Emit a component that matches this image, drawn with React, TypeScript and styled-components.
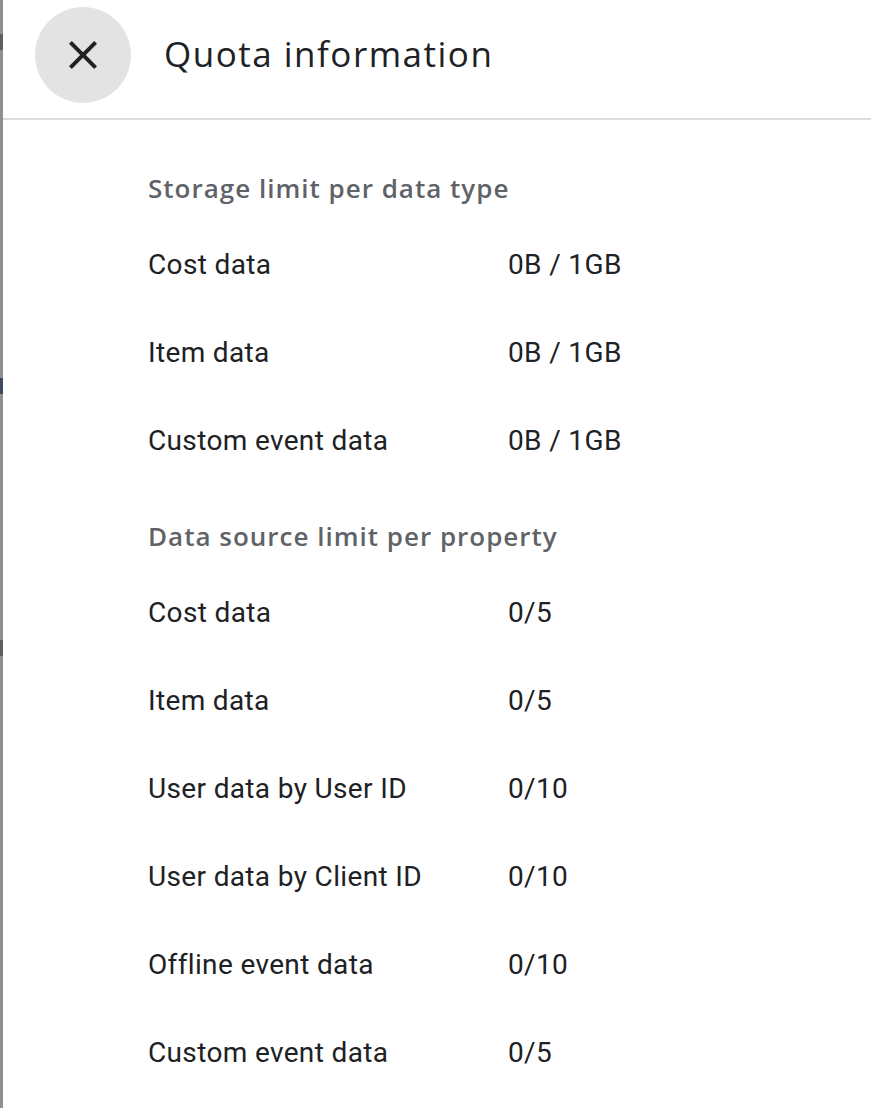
import * as React from 'react';
import styled, { createGlobalStyle } from 'styled-components';

const GlobalStyle = createGlobalStyle`
  html, body {
    margin: 0;
    padding: 0;
    background: #ffffff;
  }
  body {
    font-family: Roboto, "Liberation Sans", Arial, sans-serif;
    -webkit-font-smoothing: antialiased;
  }
`;

const Page = styled.div`
  display: flex;
  width: 871px;
  height: 1108px;
  overflow: hidden;
`;

const Scrim = styled.div`
  width: 3px;
  flex: none;
  background: #8f8f8f;
  display: flex;
  flex-direction: column;
  overflow: hidden;
`;

const ScrimGlyph = styled.span<{ $top: number; $color?: string }>`
  display: block;
  margin-top: ${(p) => p.$top}px;
  height: 16px;
  width: 3px;
  background: ${(p) => p.$color || '#4a4a4a'};
  opacity: 0.7;
`;

const Drawer = styled.div`
  flex: 1;
  display: flex;
  flex-direction: column;
  background: #ffffff;
`;

const Header = styled.header`
  height: 118px;
  display: flex;
  align-items: center;
  gap: 33px;
  padding-left: 32px;
  border-bottom: 2px solid #dadce0;
  flex: none;
`;

const CloseButton = styled.button`
  width: 96px;
  height: 96px;
  border-radius: 50%;
  border: none;
  background: #e3e3e3;
  display: flex;
  align-items: center;
  justify-content: center;
  padding: 0;
  margin-top: -8px;
  cursor: pointer;
`;

const Title = styled.h1`
  margin: 0 0 12px;
  font-family: "Open Sans", Roboto, sans-serif;
  font-size: 35px;
  font-weight: 400;
  color: #202124;
  letter-spacing: 1.5px;
`;

const Content = styled.div`
  padding: 36px 0 0 145px;
  display: flex;
  flex-direction: column;
`;

const SectionTitle = styled.h2<{ $first?: boolean }>`
  margin: ${(p) => (p.$first ? '0' : '20px')} 0 0;
  height: 64px;
  line-height: 64px;
  font-family: "Open Sans", Roboto, sans-serif;
  font-size: 26px;
  font-weight: 600;
  color: #5f6368;
  letter-spacing: 1px;
`;

const Row = styled.div`
  display: grid;
  grid-template-columns: 360px 1fr;
  align-items: center;
  height: 88px;
  font-size: 28px;
  color: #202124;
  letter-spacing: 0.35px;
`;

const Cell = styled.span``;

type Item = { label: string; value: string };

const storage: Item[] = [
  { label: 'Cost data', value: '0B / 1GB' },
  { label: 'Item data', value: '0B / 1GB' },
  { label: 'Custom event data', value: '0B / 1GB' },
];

const sources: Item[] = [
  { label: 'Cost data', value: '0/5' },
  { label: 'Item data', value: '0/5' },
  { label: 'User data by User ID', value: '0/10' },
  { label: 'User data by Client ID', value: '0/10' },
  { label: 'Offline event data', value: '0/10' },
  { label: 'Custom event data', value: '0/5' },
];

const CloseIcon = () => (
  <svg width="48" height="48" viewBox="0 0 24 24">
    <path
      d="M19 6.41 17.59 5 12 10.59 6.41 5 5 6.41 10.59 12 5 17.59 6.41 19 12 13.41 17.59 19 19 17.59 13.41 12z"
      fill="#202124"
    />
  </svg>
);

export default function App() {
  return (
    <>
      <GlobalStyle />
      <Page>
        <Scrim>
          <ScrimGlyph $top={34} />
          <ScrimGlyph $top={328} $color="#1f2a4d" />
          <ScrimGlyph $top={246} />
        </Scrim>
        <Drawer>
          <Header>
            <CloseButton aria-label="Close">
              <CloseIcon />
            </CloseButton>
            <Title>Quota information</Title>
          </Header>
          <Content>
            <SectionTitle $first>Storage limit per data type</SectionTitle>
            {storage.map((it) => (
              <Row key={'s' + it.label}>
                <Cell>{it.label}</Cell>
                <Cell>{it.value}</Cell>
              </Row>
            ))}
            <SectionTitle>Data source limit per property</SectionTitle>
            {sources.map((it) => (
              <Row key={'d' + it.label}>
                <Cell>{it.label}</Cell>
                <Cell>{it.value}</Cell>
              </Row>
            ))}
          </Content>
        </Drawer>
      </Page>
    </>
  );
}
